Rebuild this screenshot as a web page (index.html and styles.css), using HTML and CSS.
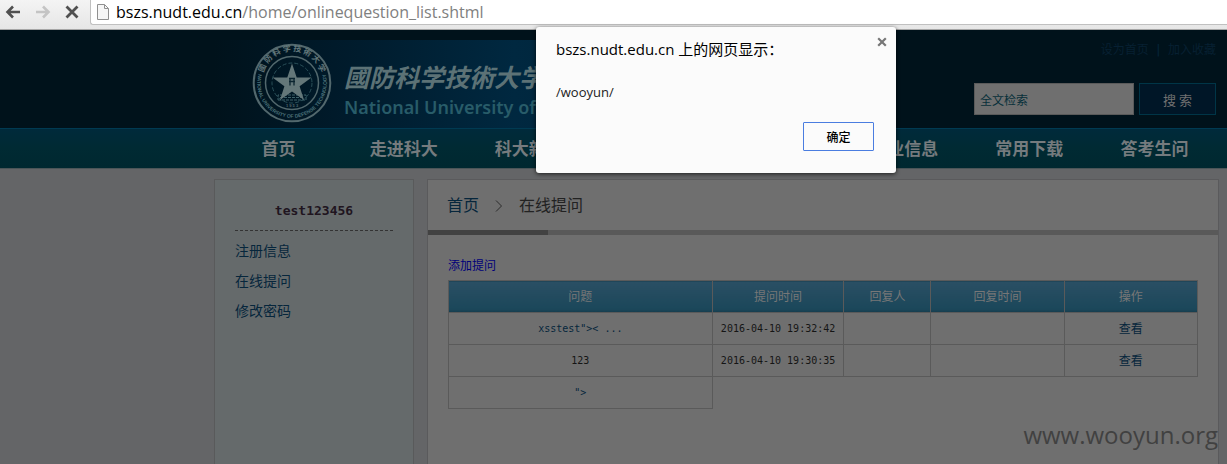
FILE: index.html
```html
<!DOCTYPE html>
<html lang="zh-CN">
<head>
<meta charset="utf-8">
<title>在线提问</title>
<link rel="stylesheet" href="styles.css">
</head>
<body>
<div class="toolbar">
  <div class="tools">
    <button class="tool" aria-label="后退"><svg width="16" height="14" viewBox="0 0 16 14"><path d="M8 1.5 2.5 7 8 12.5M3 7h12" fill="none" stroke="#505050" stroke-width="2.6"/></svg></button>
    <button class="tool" aria-label="前进"><svg width="16" height="14" viewBox="0 0 16 14"><path d="M8 1.5 13.5 7 8 12.5M13 7H1" fill="none" stroke="#c4c4c4" stroke-width="2.6"/></svg></button>
    <button class="tool" aria-label="停止"><svg width="14" height="14" viewBox="0 0 14 14"><path d="M1.5 1.5l11 11M12.500 1.500l-11 11" fill="none" stroke="#505050" stroke-width="2.8"/></svg></button>
  </div>
  <div class="address">
    <svg width="12" height="16" viewBox="0 0 12 16"><path d="M.5.5h7l4 4v11H.5z" fill="#f6f6f6" stroke="#909090"/><path d="M7.500.500v4h4" fill="none" stroke="#909090"/></svg>
    <span class="url"><b>bszs.nudt.edu.cn</b>/home/onlinequestion_list.shtml</span>
  </div>
</div>

<header class="header">
  <div class="wrap header-row">
    <div class="brand">
      <svg class="emblem" viewBox="0 0 80 80" role="img" aria-label="校徽">
        <defs>
          <path id="arc-top" d="M12 47A29.500 29.500 0 1 1 68 47"/>
          <path id="arc-bottom" d="M6.500 31A34.700 34.700 0 1 0 73.500 31"/>
        </defs>
        <g fill="none" stroke="#52686d">
          <circle cx="40" cy="40" r="38.300" stroke-width="2"/>
          <circle cx="40" cy="40" r="26.500" stroke-width="1.500"/>
          <circle cx="40" cy="40" r="20" stroke="#2a5059" stroke-dasharray="4 2"/>
          <path d="M26 57h28v-5H26zM28 54.500h24" stroke="#3d6068" stroke-dasharray="3 1"/>
        </g>
        <path d="M40 20.500 44.700 34.500H59.500L47.600 43.200 52 57 40 48.600 28 57 32.400 43.200 20.500 34.500H35.300z" fill="#647779"/>
        <path d="M37 35.500h6M37 38.500h6M38 35.500v7M42 35.500v7" fill="none" stroke="#0b2530" stroke-width="1.300"/>
        <text class="seal-cn"><textPath href="#arc-top" startOffset="50%" text-anchor="middle">國 防 科 学 技 術 大 学</textPath></text>
        <text class="seal-en"><textPath href="#arc-bottom" startOffset="50%" text-anchor="middle">NATIONAL UNIVERSITY OF DEFENSE TECHNOLOGY</textPath></text>
        <text class="seal-year" x="40" y="64" text-anchor="middle">1 9 5 3</text>
      </svg>
      <div class="brand-text">
        <div class="brand-cn">國防科学技術大学</div>
        <div class="brand-en">National University of</div>
      </div>
    </div>
    <div class="header-side">
      <div class="quick"><a href="#">设为首页</a><span>|</span><a href="#">加入收藏</a></div>
      <form class="search">
        <input type="text" aria-label="全文检索" value="全文检索">
        <button type="button">搜 索</button>
      </form>
    </div>
  </div>
</header>

<nav class="nav">
  <div class="wrap nav-row">
    <a href="#">首页</a>
    <a href="#">走进科大</a>
    <a href="#">科大新闻</a>
    <a href="#" class="nav-jobs">就业信息</a>
    <a href="#">常用下载</a>
    <a href="#">答考生问</a>
  </div>
</nav>

<div class="wrap content">
  <aside class="side">
    <h2>test123456</h2>
    <a href="#">注册信息</a>
    <a href="#">在线提问</a>
    <a href="#">修改密码</a>
  </aside>
  <main class="main">
    <div class="crumbs">
      <a href="#">首页</a>
      <svg width="8" height="12" viewBox="0 0 8 12"><path d="M1 .5 6.500 6 1 11.500" fill="none" stroke="#2c2c2c"/></svg>
      <span>在线提问</span>
    </div>
    <div class="rule"></div>
    <div class="panel">
      <a href="#" class="add">添加提问</a>
      <table class="list">
        <colgroup><col class="c-title"><col class="c-asked"><col class="c-by"><col class="c-reply"><col class="c-act"></colgroup>
        <thead><tr><th>问题</th><th>提问时间</th><th>回复人</th><th>回复时间</th><th>操作</th></tr></thead>
        <tbody>
          <tr><td><a href="#">xsstest"&gt;&lt; ...</a></td><td>2016-04-10 19:32:42</td><td></td><td></td><td><a href="#">查看</a></td></tr>
          <tr><td>123</td><td>2016-04-10 19:30:35</td><td></td><td></td><td><a href="#">查看</a></td></tr>
          <tr><td><a href="#">"&gt;</a></td></tr>
        </tbody>
      </table>
    </div>
  </main>
</div>

<div class="watermark">www.wooyun.org</div>

<div class="dialog" role="dialog" aria-labelledby="dialog-title">
  <div class="dialog-head">
    <h1 id="dialog-title">bszs.nudt.edu.cn 上的网页显示：</h1>
    <button class="close" aria-label="关闭"><svg width="10" height="10" viewBox="0 0 10 10"><path d="M1.200 1.200l7.600 7.600M8.800 1.200 1.200 8.800" fill="none" stroke="#777" stroke-width="2.200"/></svg></button>
  </div>
  <p>/wooyun/</p>
  <button class="ok">确定</button>
</div>
</body>
</html>
```
FILE: styles.css
```css
* { box-sizing: border-box; }
body {
  margin: 0;
  min-height: 100vh;
  display: flex;
  flex-direction: column;
  overflow: hidden;
  position: relative;
  background: #646567;
  color: #151515;
  font: 12px/16px "DejaVu Sans Mono", "Noto Sans CJK SC", sans-serif;
}
a { color: #06263c; text-decoration: none; }
button { font-family: inherit; cursor: pointer; }

.toolbar {
  display: flex;
  height: 30px;
  background: linear-gradient(#f4f4f4, #e6e6e6);
  border-bottom: 1px solid #a6a6a6;
}
.tools { display: flex; gap: 14px; width: 90px; height: 23px; padding-left: 5px; align-items: center; }
.tool { display: flex; padding: 0; border: 0; background: none; }
.address {
  flex: 1;
  display: flex;
  align-items: center;
  gap: 7px;
  height: 25px;
  padding-left: 6px;
  background: #fff;
  border: 1px solid #c0c0c0;
  border-width: 0 0 1px 1px;
  border-radius: 0 0 0 3px;
}
.url { font: 16px/24px "Open Sans", sans-serif; color: #808080; }
.url b { font-weight: 400; color: #000; }

.wrap { width: calc(100% - 222px); max-width: 1005px; margin: 0 8px 0 auto; }

.header { height: 98px; background: #00121b; }
.header-row { display: flex; justify-content: space-between; height: 98px; }
.brand {
  display: flex;
  gap: 12px;
  width: 600px;
  height: 88px;
  margin-top: 10px;
  padding-left: 38px;
  background: linear-gradient(90deg, #00121b, #001a2a 20%, #002840 50%, #00243a 70%, #00121b);
}
.emblem { width: 80px; height: 80px; margin-top: 3px; }
.seal-cn { font: 700 8px "Noto Sans CJK TC", sans-serif; fill: #62777a; }
.seal-en { font: 700 5px "Liberation Sans", sans-serif; fill: #4a7078; }
.seal-year { font: 700 4px "Liberation Sans", sans-serif; fill: #52686d; }
.brand-text { padding-top: 16px; white-space: nowrap; }
.brand-cn { font: italic 700 25px/40px "Noto Sans CJK TC", sans-serif; color: #5c7276; }
.brand-en { font: 600 18px/22px "Noto Sans", sans-serif; color: #285c69; }
.header-side { display: flex; flex-direction: column; align-items: flex-end; padding: 12px 3px 0 0; }
.quick { display: flex; gap: 6px; color: #06263c; }
.quick a { color: #072032; }
.search { display: flex; gap: 5px; margin-top: 25px; }
.search input {
  width: 160px;
  height: 32px;
  padding: 0 5px;
  border: 1px solid #5a5a5a;
  background: #6f6f6f;
  color: #07303a;
  font: inherit;
}
.search button {
  width: 77px;
  height: 32px;
  border: 1px solid #003547;
  background: #001627;
  color: #707070;
  font: 13px "Noto Sans CJK SC", sans-serif;
}

.nav { height: 41px; background: linear-gradient(#002a3b, #002a33 50%, #002830); border-top: 1px solid #003a52; border-bottom: 1px solid #4b5558; }
.nav-row { display: grid; grid-template-columns: repeat(8, 1fr); padding: 0 2px; }
.nav-row a { color: #757b7e; font: 700 17px/38px "Noto Sans CJK SC", sans-serif; text-align: center; white-space: nowrap; }
.nav-jobs { grid-column: 6; }

.content { flex: 1; display: flex; gap: 13px; padding-top: 10px; }
.side { width: 200px; flex: none; padding: 16px 20px; background: #656a6b; border: 1px solid #595a5b; border-bottom: 0; }
.side h2 {
  margin: 0 0 5px;
  padding-bottom: 4px;
  border-bottom: 1px dashed #333;
  font-size: 13px;
  line-height: 30px;
  color: #20151f;
  text-align: center;
}
.side a { display: block; font-size: 14px; line-height: 30px; }
.main { flex: 1; min-width: 0; background: #6f6f6f; border: 1px solid #5a5a5c; border-bottom: 0; }
.crumbs { display: flex; align-items: center; gap: 16px; height: 50px; padding: 2px 0 0 19px; font-size: 16px; color: #222; }
.rule { height: 5px; background: linear-gradient(90deg, #424242 120px, #595959 120px); }
.panel { padding: 23px 20px; }
.add { display: block; margin-bottom: 6px; color: #00007a; }
.list { width: 100%; border-collapse: collapse; table-layout: fixed; }
.c-title { width: 35.2%; }
.c-asked { width: 17.6%; }
.c-by { width: 11.6%; }
.c-reply { width: 17.8%; }
.c-act { width: 17.8%; }
.list th, .list td {
  height: 32px;
  padding: 0;
  border: 1px solid #5a5a5a;
  text-align: center;
  font-size: 10px;
}
.list th { font-size: 12px; font-weight: 400; color: #777; background: linear-gradient(#2a4f64, #1b475a 90%, #163c4c); }
.list td:last-child:not(:first-child) { font-size: 12px; }

.watermark { position: absolute; right: 9px; bottom: 12px; font: 24px/34px "Open Sans", sans-serif; color: #414141; }

.dialog {
  position: absolute;
  left: 536px;
  top: 27px;
  width: 360px;
  display: flex;
  flex-direction: column;
  padding: 9px 8px 22px 20px;
  background: #fbfbfb;
  border-radius: 3px;
  box-shadow: 0 1px 4px rgba(0, 0, 0, .7);
}
.dialog-head { display: flex; justify-content: space-between; align-items: flex-start; }
.dialog h1 { margin: 0; font: 15px/26px "Open Sans", "Noto Sans CJK SC", sans-serif; color: #000; }
.close { display: flex; padding: 1px; border: 0; background: none; }
.dialog p { margin: 20px 0; font: 13px/20px "Open Sans", sans-serif; color: #222; }
.ok {
  align-self: flex-end;
  width: 71px;
  height: 29px;
  margin-right: 14px;
  border: 1px solid #4a7de0;
  border-radius: 1px;
  background: #fbfbfb;
  color: #000;
  font: 500 12px "Noto Sans CJK SC", sans-serif;
}
```
